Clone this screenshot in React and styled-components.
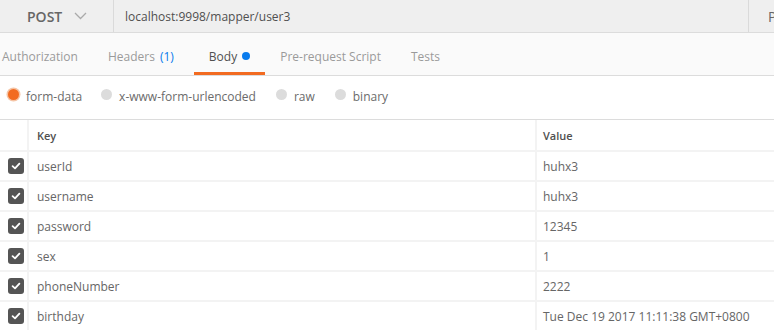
import React from 'react';
import styled, { createGlobalStyle } from 'styled-components';

const Global = createGlobalStyle`
  html, body { margin:0; padding:0; background:#fff; }
  body { font-family:"Open Sans", "Liberation Sans", sans-serif; overflow:hidden; }
  * { box-sizing:border-box; }
`;

const Page = styled.div`
  width:774px;
  height:330px;
  overflow:hidden;
  background:#fff;
`;

const UrlBar = styled.div`
  display:flex;
  align-items:center;
  height:33px;
  background:#efefef;
  border-bottom:1px solid #dcdcdc;
`;

const Method = styled.div`
  width:114px;
  height:100%;
  display:flex;
  align-items:center;
  padding-left:27px;
  gap:12px;
  border-right:1px solid #dadada;
  font-size:14px;
  font-weight:600;
  color:#666;
`;

const Url = styled.div`
  flex:1;
  height:100%;
  display:flex;
  align-items:center;
  padding-left:11px;
  font-size:12px;
  color:#505050;
  border-right:1px solid #dadada;
`;

const Params = styled.div`
  width:25px;
  padding-left:19px;
  font-size:14px;
  color:#666;
  white-space:nowrap;
  overflow:hidden;
`;

const TabBar = styled.div`
  display:flex;
  height:43px;
  background:#fafafa;
  border-bottom:1px solid #dcdcdc;
  margin-left:-13px;
`;

const Tab = styled.div`
  display:flex;
  align-items:center;
  gap:5px;
  padding:8px ${p => p.right || 15}px 0 15px;
  font-size:12px;
  color:${p => (p.active ? '#505050' : '#9a9a9a')};
  border-bottom:3px solid ${p => (p.active ? '#f26b21' : 'transparent')};
`;

const Count = styled.span`
  color:#097bed;
`;

const Dot = styled.span`
  width:8px;
  height:8px;
  border-radius:50%;
  background:#097bed;
  margin-top:-1px;
`;

const ModeRow = styled.div`
  display:flex;
  align-items:center;
  height:44px;
  padding-left:8px;
  border-bottom:1px solid #dcdcdc;
`;

const Mode = styled.label`
  display:flex;
  align-items:center;
  gap:7px;
  margin-right:${p => p.gap || 0}px;
  font-size:12px;
  color:#6b6b6b;
  margin-top:-2px;
`;

const Radio = styled.span`
  width:11px;
  height:11px;
  border-radius:50%;
  margin-top:-4px;
  background:${p => (p.on ? '#f26b21' : '#dcdcdc')};
  box-shadow:${p => (p.on ? '0 0 0 1.5px #f5c4a5' : 'none')};
`;

const Table = styled.div`
  display:grid;
  grid-template-columns:27px 506px 1fr;
  column-gap:2px;
  row-gap:2px;
  background:#f3f3f3;
`;

const Cell = styled.div`
  background:#fff;
  height:${p => p.h || 28}px;
  display:flex;
  align-items:center;
  padding-left:${p => p.pad || 8}px;
  font-size:${p => (p.head ? 11 : 12)}px;
  font-weight:${p => (p.head ? 600 : 400)};
  color:${p => (p.head ? '#505050' : '#666')};
  white-space:nowrap;
`;

const Box = styled.span`
  width:16px;
  height:16px;
  border-radius:3px;
  background:#555;
  display:flex;
  align-items:center;
  justify-content:center;
`;

const Check = () => (
  <Box>
    <svg width="10" height="10" viewBox="0 0 10 10">
      <path d="M1.6 5.2 L4 7.4 L8.4 2.6" fill="none" stroke="#fff" strokeWidth="1.8" strokeLinecap="round" strokeLinejoin="round" />
    </svg>
  </Box>
);

const rows = [
  ['userId', 'huhx3'],
  ['username', 'huhx3'],
  ['password', '12345'],
  ['sex', '1'],
  ['phoneNumber', '2222'],
  ['birthday', 'Tue Dec 19 2017 11:11:38 GMT+0800'],
];

export default function App() {
  return (
    <Page>
      <Global />
      <UrlBar>
        <Method>
          POST
          <svg width="13" height="8" viewBox="0 0 13 8">
            <path d="M1 1 L6.5 6.5 L12 1" fill="none" stroke="#aaa" strokeWidth="1.3" />
          </svg>
        </Method>
        <Url>localhost:9998/mapper/user3</Url>
        <Params>P</Params>
      </UrlBar>
      <TabBar>
        <Tab>Authorization</Tab>
        <Tab right={20}>Headers <Count>(1)</Count></Tab>
        <Tab active>Body<Dot /></Tab>
        <Tab>Pre-request Script</Tab>
        <Tab>Tests</Tab>
      </TabBar>
      <ModeRow>
        <Mode gap={19}><Radio on />form-data</Mode>
        <Mode gap={20}><Radio />x-www-form-urlencoded</Mode>
        <Mode gap={20}><Radio />raw</Mode>
        <Mode><Radio />binary</Mode>
      </ModeRow>
      <Table>
        <Cell h={30} />
        <Cell head h={30}>Key</Cell>
        <Cell head h={30} pad={6}>Value</Cell>
        {rows.map(([k, v]) => (
          <React.Fragment key={k}>
            <Cell pad={8}><Check /></Cell>
            <Cell>{k}</Cell>
            <Cell pad={6}>{v}</Cell>
          </React.Fragment>
        ))}
      </Table>
    </Page>
  );
}
